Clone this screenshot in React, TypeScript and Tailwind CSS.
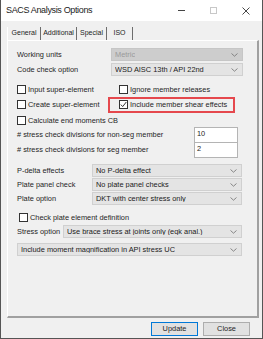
import React from 'react';

function Chevron() {
  return (
    <svg width="7" height="4" viewBox="0 0 7 4" className="shrink-0">
      <path d="M0.5 0.5 L3.5 3.2 L6.5 0.5" fill="none" stroke="#707070" strokeWidth="0.8" />
    </svg>
  );
}

function Select({ value, className = '', disabled = false }: { value: string; className?: string; disabled?: boolean }) {
  return (
    <div
      className={
        'flex h-[13px] items-center justify-between border pl-[3px] pr-[4px] ' +
        (disabled ? 'border-[#c6c6c6] bg-[#cdcdcd] text-[#9a9a9a]' : 'border-[#d0d0d0] bg-[#e4e4e4] text-[#1a1a1a]') +
        ' ' +
        className
      }
    >
      <span className="truncate leading-none">{value}</span>
      <Chevron />
    </div>
  );
}

function Check({ label, checked = false }: { label: string; checked?: boolean }) {
  return (
    <div className="flex h-[13px] items-center gap-[2px]">
      <div className="flex h-[9px] w-[9px] shrink-0 items-center justify-center border border-[#333] bg-white">
        {checked && (
          <svg width="7" height="7" viewBox="0 0 7 7">
            <path d="M0.8 3.6 L2.7 5.6 L6.3 1" fill="none" stroke="#222" strokeWidth="0.9" />
          </svg>
        )}
      </div>
      <span className="leading-none">{label}</span>
    </div>
  );
}

export default function App() {
  const tabs = [
    { name: 'General', w: 'w-[34px]' },
    { name: 'Additional', w: 'w-[36px]' },
    { name: 'Special', w: 'w-[30px]' },
    { name: 'ISO', w: 'w-[26px]' },
  ];

  return (
    <div className="flex h-[339px] w-[263px] flex-col whitespace-nowrap border-x border-b border-[#555] bg-[#f0f0f0] font-['Liberation_Sans',Arial,sans-serif] text-[7.4px] text-[#1e1e1e]">
      {/* title bar */}
      <div className="flex h-[21px] shrink-0 items-center bg-white pl-[5px]">
        <span className="text-[9px] tracking-[-0.35px] text-[#222]">SACS Analysis Options</span>
        <div className="ml-auto flex items-center">
          <div className="mr-[25px] h-px w-[7px] bg-[#444]" />
          <div className="mr-[25px] h-[7px] w-[7px] border border-[#c8c8c8]" />
          <svg width="8" height="8" viewBox="0 0 8 8" className="mr-[12px]">
            <path d="M0.5 0.5 L7.5 7.5 M7.5 0.5 L0.5 7.5" stroke="#333" strokeWidth="0.9" />
          </svg>
        </div>
      </div>

      <div className="flex flex-1 flex-col pl-[6px] pr-[3px] pt-[6px]">
        {/* tabs */}
        <div className="flex h-[13px] shrink-0 text-[7px]">
          {tabs.map((t, i) => (
            <div
              key={t.name}
              className={
                'flex items-center justify-center border-r border-[#6d6d6d] ' +
                t.w +
                (i === 0 ? ' border-l border-l-white' : '')
              }
            >
              {t.name}
            </div>
          ))}
        </div>

        {/* panel */}
        <div className="flex h-[278px] shrink-0 flex-col border border-b-2 border-r-2 border-l-white border-t-white border-b-[#a0a0a0] border-r-[#a0a0a0] pl-[9px] pr-[14px] pt-[7px]">
          <div className="flex h-[13px] items-center">
            <span className="w-[94px]">Working units</span>
            <Select value="Metric" disabled className="w-[132px]" />
          </div>
          <div className="mt-[2px] flex h-[13px] items-center">
            <span className="w-[94px]">Code check option</span>
            <Select value="WSD AISC 13th / API 22nd" className="w-[132px]" />
          </div>

          <div className="mt-[7px] grid grid-cols-[102px_1fr]">
            <Check label="Input super-element" />
            <Check label="Ignore member releases" />
          </div>
          <div className="mt-[2px] grid grid-cols-[102px_1fr]">
            <Check label="Create super-element" />
            <div className="relative">
              <Check label="Include member shear effects" checked />
              <div className="absolute left-[-11px] top-[-1px] h-[16px] w-[127px] border-2 border-[#e5484d]" />
            </div>
          </div>
          <div className="mt-[3px]">
            <Check label="Calculate end moments CB" />
          </div>

          <div className="flex h-[16px] items-center">
            <span className="w-[177px]"># stress check divisions for non-seg member</span>
            <div className="h-[16px] w-[44px] border border-[#b4b4b4] bg-white pl-[2px] pt-[2px] leading-none">10</div>
          </div>
          <div className="-mt-px flex h-[16px] items-center">
            <span className="w-[177px]"># stress check divisions for seg member</span>
            <div className="h-[16px] w-[44px] border border-[#b4b4b4] bg-white pl-[2px] pt-[2px] leading-none">2</div>
          </div>

          <div className="mt-[6px] flex h-[13px] items-center">
            <span className="w-[75px]">P-delta effects</span>
            <Select value="No P-delta effect" className="w-[150px]" />
          </div>
          <div className="mt-px flex h-[13px] items-center">
            <span className="w-[75px]">Plate panel check</span>
            <Select value="No plate panel checks" className="w-[150px]" />
          </div>
          <div className="mt-px flex h-[13px] items-center">
            <span className="w-[75px]">Plate option</span>
            <Select value="DKT with center stress only" className="w-[150px]" />
          </div>

          <div className="mt-[6px] pl-[2px]">
            <Check label="Check plate element definition" />
          </div>

          <div className="mt-px flex h-[13px] items-center">
            <span className="w-[46px]">Stress option</span>
            <Select value="Use brace stress at joints only (eqk anal.)" className="w-[179px]" />
          </div>
          <Select value="Include moment magnification in API stress UC" className="mt-[5px] w-[225px]" />
        </div>

        {/* buttons */}
        <div className="mt-[4px] flex justify-end gap-[5px] pr-[9px]">
          <button className="h-[14px] w-[47px] border border-[#0078d7] bg-[#e1e1e1] text-[7.4px] leading-none">Update</button>
          <button className="h-[14px] w-[47px] border border-[#adadad] bg-[#e1e1e1] text-[7.4px] leading-none">Close</button>
        </div>
      </div>
    </div>
  );
}
